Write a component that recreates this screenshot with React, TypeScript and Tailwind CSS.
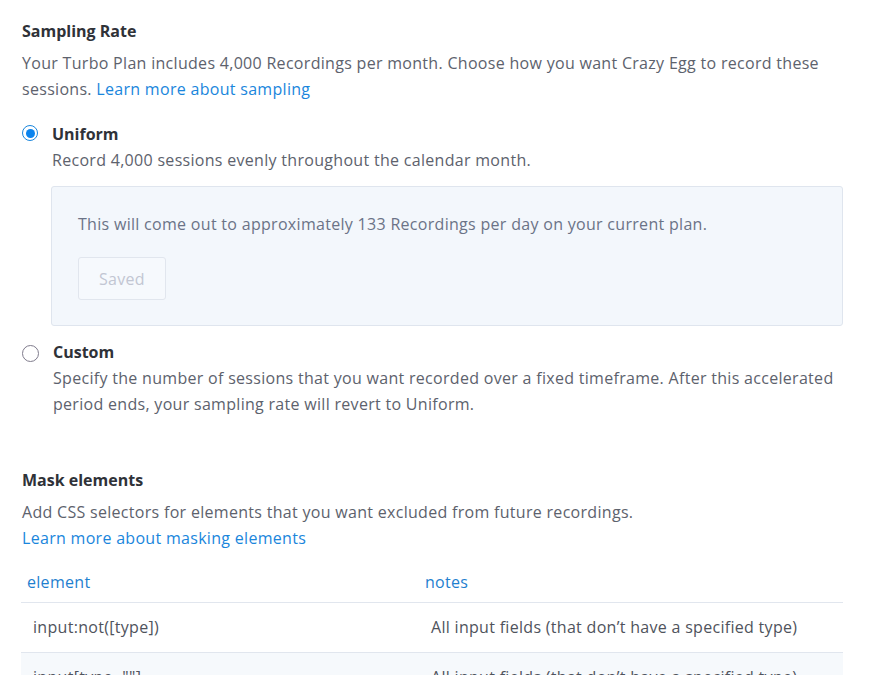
export default function App() {
  return (
    <div className="min-h-screen bg-white font-['Open_Sans',sans-serif] text-[16px] tracking-[0.3px] text-[#5d626d] overflow-hidden">
      <div className="w-[821px] ml-[22px] pt-[19px]">
        <h2 className="text-[16px] leading-[24px] font-bold tracking-normal text-[#2f3238]">Sampling Rate</h2>
        <p className="mt-[7px] leading-[26px]">
          Your Turbo Plan includes 4,000 Recordings per month. Choose how you want Crazy Egg to record these
          sessions. <a className="text-[#1a86dc]">Learn more about sampling</a>
        </p>

        <div className="mt-[19px] flex gap-[14px]">
          <div className="mt-[4px] w-[16px] h-[16px] shrink-0 rounded-full border-[1.5px] border-[#1a86dc] flex items-center justify-center">
            <div className="w-[9px] h-[9px] rounded-full bg-[#0b84ee]" />
          </div>
          <div className="flex-1">
            <div className="leading-[26px] font-bold tracking-normal text-[#2f3238]">Uniform</div>
            <div className="leading-[26px]">Record 4,000 sessions evenly throughout the calendar month.</div>
          </div>
        </div>

        <div className="mt-[13px] ml-[29px] border border-[#dfe5ee] bg-[#f3f7fc] rounded-[3px] px-[26px] pt-[24px] pb-[25px]">
          <p className="leading-[26px] text-[#6b7387]">
            This will come out to approximately 133 Recordings per day on your current plan.
          </p>
          <button className="mt-[20px] w-[88px] h-[43px] border border-[#e1e6ee] bg-[#f6f9fd] rounded-[3px] text-[#c2c6d3]">
            Saved
          </button>
        </div>

        <div className="mt-[13px] flex gap-[14px]">
          <div className="mt-[6px] w-[17px] h-[17px] shrink-0 rounded-full border border-[#7f7b8c]" />
          <div className="flex-1">
            <div className="leading-[26px] font-bold tracking-normal text-[#2f3238]">Custom</div>
            <div className="leading-[26px]">
              Specify the number of sessions that you want recorded over a fixed timeframe. After this accelerated
              period ends, your sampling rate will revert to Uniform.
            </div>
          </div>
        </div>

        <h2 className="mt-[51px] text-[16px] leading-[24px] font-bold tracking-normal text-[#2f3238]">Mask elements</h2>
        <p className="mt-[7px] leading-[26px]">
          Add CSS selectors for elements that you want excluded from future recordings.
          <br />
          <a className="text-[#1a86dc]">Learn more about masking elements</a>
        </p>

        <div className="mt-[8px] -ml-[1px]">
          <div className="grid grid-cols-[398px_1fr] border-b border-[#e1e6ee] pt-[11px] pb-[8px] leading-[24px] text-[#1f7fcf]">
            <div className="pl-[6px]">element</div>
            <div className="pl-[6px]">notes</div>
          </div>
          <div className="grid grid-cols-[398px_1fr] border-b border-[#e1e6ee] pt-[12px] pb-[13px] leading-[24px] text-[#4f535c]">
            <div className="pl-[12px]">input:not([type])</div>
            <div className="pl-[12px]">All input fields (that don’t have a specified type)</div>
          </div>
          <div className="grid grid-cols-[398px_1fr] bg-[#f6f9fc] pt-[12px] pb-[13px] leading-[24px] text-[#4f535c]">
            <div className="pl-[12px]">input[type=""]</div>
            <div className="pl-[12px]">All input fields (that don’t have a specified type)</div>
          </div>
        </div>
      </div>
    </div>
  );
}
